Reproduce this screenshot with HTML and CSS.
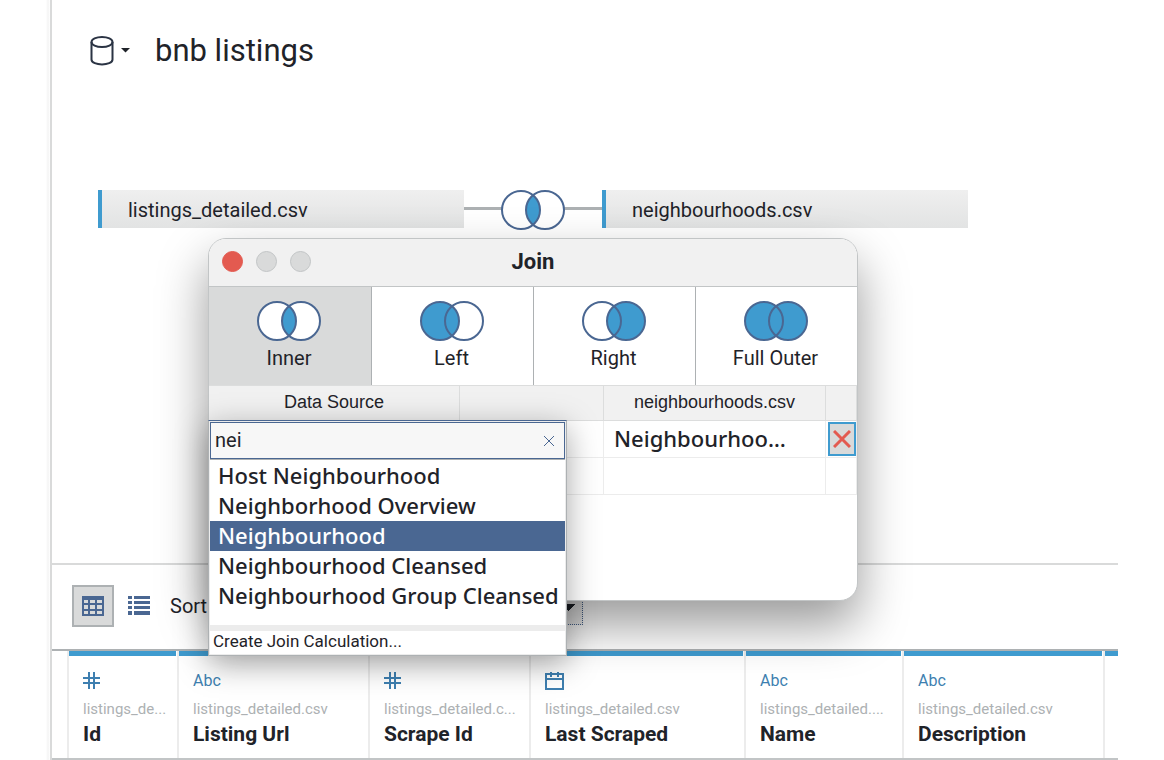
FILE: index.html
```html
<!DOCTYPE html>
<html lang="en">
<head>
<meta charset="utf-8">
<title>bnb listings</title>
<meta name="viewport" content="width=device-width, initial-scale=1">
<link rel="stylesheet" href="styles.css">
</head>
<body>
<svg class="defs" aria-hidden="true">
  <defs>
    <g id="rings">
      <circle cx="21" cy="21" r="19" />
      <circle cx="45" cy="21" r="19" />
    </g>
    <path id="lens" d="M33 6.3a19 19 0 0 1 0 29.4a19 19 0 0 1 0-29.4z" />
  </defs>
</svg>
<div class="app">
  <div class="gutter"></div>
  <main class="workspace">
    <section class="canvas">
      <header class="source">
        <button class="source-menu" aria-label="Data source menu">
          <svg width="42" height="32" viewBox="0 0 42 32">
            <path class="outline" d="M1.500 7v17.500c0 6.500 21 6.500 21 0V7" />
            <ellipse class="outline" cx="12" cy="7" rx="10.500" ry="5" />
            <path class="solid" d="M31 13h9l-4.500 4.500z" />
          </svg>
        </button>
        <h1 class="source-name">bnb listings</h1>
      </header>
      <div class="tables">
        <div class="node">listings_detailed.csv</div>
        <div class="link">
          <svg class="venn" width="66" height="42" viewBox="0 0 66 42">
            <use class="white" href="#rings" /><use class="blue" href="#lens" /><use class="ring" href="#rings" />
          </svg>
        </div>
        <div class="node">neighbourhoods.csv</div>
      </div>
    </section>

    <section class="toolbar">
      <button class="view view-on" aria-label="Grid view">
        <svg width="22" height="20" viewBox="0 0 22 20">
          <path class="solid" d="M0 0h22v20H0z" />
          <path class="cells" d="M2 4h4v3H2zM8 4h5v3H8zM15 4h5v3h-5zM2 9h4v4H2zM8 9h5v4H8zM15 9h5v4h-5zM2 15h4v3H2zM8 15h5v3H8zM15 15h5v3h-5z" />
        </svg>
      </button>
      <button class="view view-list" aria-label="List view">
        <svg width="22" height="20" viewBox="0 0 22 20">
          <path class="solid" d="M0 0h4v3H0zM6 0h16v3H6zM0 5h4v3H0zM6 5h16v3H6zM0 10h4v3H0zM6 10h16v3H6zM0 15h4v4H0zM6 15h16v4H6z" />
        </svg>
      </button>
      <label class="sort-label" for="sort">Sort</label>
      <select class="sort" id="sort"><option></option></select>
    </section>

    <table class="fields">
      <colgroup><col class="w0"><col class="w1"><col class="w2"><col class="w3"><col class="w4"><col class="w5"><col class="w6"><col></colgroup>
      <tr>
        <td></td>
        <th scope="col"><div class="field">
          <svg class="type" width="18" height="18" viewBox="0 0 18 18"><path d="M6 0v17M11 0v17M0 6h17M0 11h17" /></svg>
          <span class="origin">listings_de...</span><span class="name">Id</span></div></th>
        <th scope="col"><div class="field">
          <span class="abc">Abc</span>
          <span class="origin">listings_detailed.csv</span><span class="name">Listing Url</span></div></th>
        <th scope="col"><div class="field">
          <svg class="type" width="18" height="18" viewBox="0 0 18 18"><path d="M6 0v17M11 0v17M0 6h17M0 11h17" /></svg>
          <span class="origin">listings_detailed.c...</span><span class="name">Scrape Id</span></div></th>
        <th scope="col"><div class="field">
          <svg class="type" width="20" height="18" viewBox="0 0 20 18"><path d="M1 2h17v15H1zM1 7h17M6 0v5M13 0v5" /></svg>
          <span class="origin">listings_detailed.csv</span><span class="name">Last Scraped</span></div></th>
        <th scope="col"><div class="field">
          <span class="abc">Abc</span>
          <span class="origin">listings_detailed....</span><span class="name">Name</span></div></th>
        <th scope="col"><div class="field">
          <span class="abc">Abc</span>
          <span class="origin">listings_detailed.csv</span><span class="name">Description</span></div></th>
        <td><div class="field field-cut"></div></td>
      </tr>
    </table>
  </main>

  <div class="dialog" role="dialog" aria-labelledby="join-title">
    <div class="titlebar">
      <div class="lights">
        <button class="light light-close" aria-label="Close"></button>
        <button class="light" aria-label="Minimize"></button>
        <button class="light" aria-label="Zoom"></button>
      </div>
      <h2 class="title" id="join-title">Join</h2>
    </div>
    <div class="kinds">
      <button class="kind kind-on">
        <svg class="venn" width="66" height="42" viewBox="0 0 66 42"><use class="white" href="#rings" /><use class="blue" href="#lens" /><use class="ring" href="#rings" /></svg>
        Inner</button>
      <button class="kind">
        <svg class="venn" width="66" height="42" viewBox="0 0 66 42"><circle class="blue" cx="21" cy="21" r="19" /><use class="ring" href="#rings" /></svg>
        Left</button>
      <button class="kind">
        <svg class="venn" width="66" height="42" viewBox="0 0 66 42"><circle class="blue" cx="45" cy="21" r="19" /><use class="ring" href="#rings" /></svg>
        Right</button>
      <button class="kind">
        <svg class="venn" width="66" height="42" viewBox="0 0 66 42"><use class="blue" href="#rings" /><use class="ring" href="#rings" /></svg>
        Full Outer</button>
    </div>
    <table class="clauses">
      <colgroup><col class="c1"><col class="c2"><col class="c3"><col class="c4"></colgroup>
      <thead><tr><th scope="col">Data Source</th><th></th><th scope="col">neighbourhoods.csv</th><th></th></tr></thead>
      <tbody>
        <tr><td></td><td></td><td class="right-field">Neighbourhoo…</td>
          <td><button class="remove" aria-label="Remove clause"><svg width="18" height="18" viewBox="0 0 18 18"><path d="M1 1l16 16M17 1L1 17" /></svg></button></td></tr>
        <tr><td></td><td></td><td></td><td></td></tr>
      </tbody>
    </table>

    <div class="picker">
      <div class="search">
        <input class="query" type="text" value="nei" aria-label="Search fields">
        <button class="clear" aria-label="Clear"><svg width="12" height="12" viewBox="0 0 12 12"><path d="M1 1l10 10M11 1L1 11" /></svg></button>
      </div>
      <ul class="options" role="listbox" aria-label="Fields">
        <li class="option" role="option">Host Neighbourhood</li>
        <li class="option" role="option">Neighborhood Overview</li>
        <li class="option option-on" role="option" aria-selected="true">Neighbourhood</li>
        <li class="option" role="option">Neighbourhood Cleansed</li>
        <li class="option" role="option">Neighbourhood Group Cleansed</li>
      </ul>
      <button class="create">Create Join Calculation...</button>
    </div>
  </div>
</div>
</body>
</html>
```
FILE: styles.css
```css
* { box-sizing: border-box; }
body { margin: 0; background: #fff; color: #1f2329; font-family: Roboto, "Liberation Sans", sans-serif; font-size: 20px; }
button { border: 0; padding: 0; background: none; color: inherit; font: inherit; }
svg { display: block; }
h1, h2, ul { margin: 0; padding: 0; font-weight: 400; }
.defs { position: absolute; width: 0; height: 0; }

.app { position: relative; display: flex; min-height: 100vh; padding-right: 46px; overflow: hidden; }
.gutter { flex: none; width: 52px; border-right: 2px solid #d9dada; background: linear-gradient(90deg, #fff 46px, #f4f4f4 48px, #fff 50px); }
.workspace { flex: 1; min-width: 0; display: flex; flex-direction: column; border-bottom: 2px solid #c2c5c6; }

.canvas { flex: 1; padding: 30px 38px; border-bottom: 2px solid #d9dada; }
.source { display: flex; align-items: center; height: 42px; gap: 23px; }
.source-name { font-size: 31px; line-height: 44px; }
.outline { fill: none; stroke: #2b3444; stroke-width: 2; }
.source-menu .solid { fill: #1f2329; }
.tables { display: flex; align-items: flex-start; margin-top: 118px; padding-left: 8px; }
.node { flex: 0 1 366px; height: 38px; padding-left: 26px; border-left: 4px solid #3f9bcf; background: linear-gradient(#efefef, #e2e3e3); font-size: 20px; line-height: 40px; }
.link { flex: none; display: flex; justify-content: center; width: 138px; background: linear-gradient(#adb1b3, #adb1b3) center 17px / 100% 3px no-repeat; }
.white { fill: #fff; }
.blue { fill: #3f9bcf; }
.ring { fill: none; stroke: #4a6792; stroke-width: 2; }
.link .venn { margin-top: -1px; }

.toolbar { display: flex; align-items: center; height: 84px; padding: 0 0 2px 20px; }
.view { display: grid; place-items: center; width: 42px; height: 42px; }
.view-on { border: 2px solid #adb1b3; background: #d9dada; }
.view-list { width: 50px; }
.view .solid { fill: #4a6792; }
.cells { fill: #d9dada; }
.sort-label { width: 130px; padding-left: 6px; line-height: 26px; }
.sort {
  width: 289px; height: 38px; border: 1px dotted #4a6792; appearance: none;
  background:
    linear-gradient(135deg, #1f2329 50%, transparent 50%) right 7px top 16px / 7px 7px no-repeat,
    linear-gradient(225deg, #1f2329 50%, transparent 50%) right 14px top 16px / 7px 7px no-repeat,
    #f1f1f1;
}

.fields { width: 100%; height: 109px; table-layout: fixed; border-collapse: separate; border-spacing: 0; border-top: 2px solid #adb1b3; }
.fields th, .fields td { padding: 0; vertical-align: top; text-align: left; font-weight: 400; }
.fields th, .fields td:last-child { border-left: 2px solid #ececec; }
.w0 { width: 15px; } .w1 { width: 110px; } .w2 { width: 191px; } .w3 { width: 161px; }
.w4 { width: 215px; } .w5 { width: 158px; } .w6 { width: 201px; }
.field { display: flex; flex-direction: column; margin-right: 1px; padding: 16px 0 0 14px; border-top: 5px solid #3f9bcf; white-space: nowrap; }
.field-cut { margin: 0; padding: 0; }
.type { height: 18px; margin-bottom: 9px; fill: none; stroke: #3e7fb0; stroke-width: 2; }
.abc { height: 18px; margin-bottom: 9px; color: #3e7fb0; font-size: 16px; line-height: 18px; }
.origin { color: #adb1b3; font-size: 15px; line-height: 20px; }
.name { font-size: 21px; font-weight: 700; line-height: 30px; }

.dialog { position: absolute; left: 208px; top: 238px; width: 650px; height: 363px; border: 1px solid #c2c5c6; border-radius: 18px; background: #fff; box-shadow: 0 24px 50px rgba(0, 0, 0, .4); }
.titlebar { display: grid; grid-template-columns: 1fr auto 1fr; align-items: center; height: 48px; padding-bottom: 2px; border-bottom: 1px solid #c2c5c6; border-radius: 17px 17px 0 0; background: #f1f1f1; }
.lights { display: flex; gap: 13px; padding-left: 13px; }
.light { width: 21px; height: 21px; border: 1px solid #c2c5c6; border-radius: 50%; background: #d9dada; }
.light-close { border-color: #e35a50; background: #e35a50; }
.title { font-size: 22px; font-weight: 700; }
.kinds { display: grid; grid-template-columns: repeat(4, 1fr); height: 98px; }
.kind { display: flex; flex-direction: column; align-items: center; padding: 13px 2px 0 0; line-height: 32px; }
.kind + .kind { border-left: 1px solid #adb1b3; }
.kind-on { background: #d9dada; }
.clauses { width: 100%; table-layout: fixed; border-collapse: separate; border-spacing: 0; }
.c1 { width: 251px; } .c2 { width: 144px; } .c3 { width: 222px; }
.clauses th { height: 36px; padding: 0 0 2px; border: solid #dcdddd; border-width: 1px 1px 1px 0; background: #f1f1f1; font: 400 18px "Liberation Sans", sans-serif; }
.clauses td { height: 37px; padding: 0; border: solid #ececec; border-width: 0 1px 1px 0; }
.clauses td.right-field { padding: 0 0 2px 10px; font: 500 22px/34px "Noto Sans", sans-serif; }
.remove { display: grid; place-items: center; width: 28px; height: 34px; margin-left: 2px; border: 2px solid #3f9bcf; background: #d9dada; }
.remove svg { fill: none; stroke: #e35a50; stroke-width: 3; }

.picker { position: absolute; left: -1px; top: 181px; width: 359px; padding: 1px; border: 1px solid #adb1b3; border-top-color: #4a6792; background: #ececec; box-shadow: 0 8px 30px rgba(0, 0, 0, .35); }
.search { display: flex; align-items: center; height: 37px; padding-right: 9px; border: 1px solid #4a6792; background: #f7f7f7; }
.query { flex: 1; min-width: 0; padding: 0 4px 2px; border: 0; background: none; color: inherit; font: inherit; outline: 0; }
.clear svg { fill: none; stroke: #4a6792; stroke-width: 1; }
.options { height: 166px; padding-top: 1px; border-top: 1px solid #adb1b3; background: #fff; list-style: none; }
.option { height: 30px; padding-left: 8px; font: 500 22px/28px "Noto Sans", sans-serif; white-space: nowrap; }
.option-on { background: #4a6792; color: #fff; }
.create { display: block; width: 100%; height: 23px; margin-top: 6px; padding: 0 0 3px 3px; background: #fff; font-size: 17px; line-height: 20px; text-align: left; }
```
